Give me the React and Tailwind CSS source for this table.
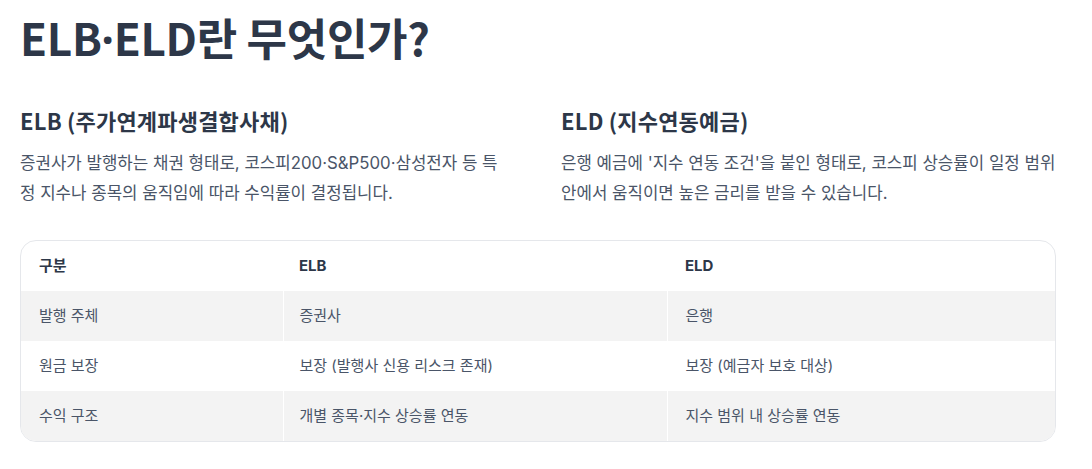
export default function App() {
    const rows = [
        ["발행 주체", "증권사", "은행"],
        ["원금 보장", "보장 (발행사 신용 리스크 존재)", "보장 (예금자 보호 대상)"],
        ["수익 구조", "개별 종목·지수 상승률 연동", "지수 범위 내 상승률 연동"],
    ]

    return (
        <div className="bg-white min-h-screen px-5 pt-[11px] text-[#2d3748] font-['Noto_Sans_CJK_KR',sans-serif]">
            <h1 className="text-[44px] font-bold leading-[1.2] tracking-[-0.3px]">
                ELB<span className="font-['Noto_Sans',sans-serif]">·</span>ELD란 무엇인가?
            </h1>

            <div className="grid grid-cols-[485px_1fr] gap-[56px] mt-[39px] w-[1036px]">
                <div>
                    <h2 className="text-[22px] font-bold leading-[30px] tracking-[0.2px]">ELB (주가연계파생결합사채)</h2>
                    <p className="mt-[13px] text-[16.8px] leading-[30px] text-[#4a5568] font-['Inter','Noto_Sans_CJK_KR',sans-serif]">
                        증권사가 발행하는 채권 형태로, 코스피200·S&P500·삼성전자 등 특정 지수나 종목의 움직임에 따라 수익률이 결정됩니다.
                    </p>
                </div>
                <div>
                    <h2 className="text-[22px] font-bold leading-[30px] tracking-[0.2px]">ELD (지수연동예금)</h2>
                    <p className="mt-[13px] text-[16.8px] leading-[30px] text-[#4a5568] font-['Inter','Noto_Sans_CJK_KR',sans-serif]">
                        은행 예금에 '지수 연동 조건'을 붙인 형태로, 코스피 상승률이 일정 범위 안에서 움직이면 높은 금리를 받을 수 있습니다.
                    </p>
                </div>
            </div>

            <div className="mt-[32px] w-[1036px] border border-[#e5e7eb] rounded-[16px] overflow-hidden font-['Inter','Noto_Sans_CJK_KR',sans-serif]">
                <table className="w-full border-collapse text-[15px]">
                    <thead>
                        <tr className="h-[50px] text-left">
                            <th className="w-[262px] pl-[18px] font-bold text-[#2d3748]">구분</th>
                            <th className="w-[384px] pl-[16px] font-bold text-[#2d3748]">ELB</th>
                            <th className="pl-[18px] font-bold text-[#2d3748]">ELD</th>
                        </tr>
                    </thead>
                    <tbody>
                        {rows.map((r, i) => (
                            <tr key={i} className={i % 2 === 0 ? "h-[50px] bg-[#f3f3f3]" : "h-[50px] bg-white"}>
                                <td className="pl-[18px] text-[#4a5568] border-r border-white">{r[0]}</td>
                                <td className="pl-[16px] text-[#4a5568] border-r border-white">{r[1]}</td>
                                <td className="pl-[18px] text-[#4a5568]">{r[2]}</td>
                            </tr>
                        ))}
                    </tbody>
                </table>
            </div>
        </div>
    )
}
